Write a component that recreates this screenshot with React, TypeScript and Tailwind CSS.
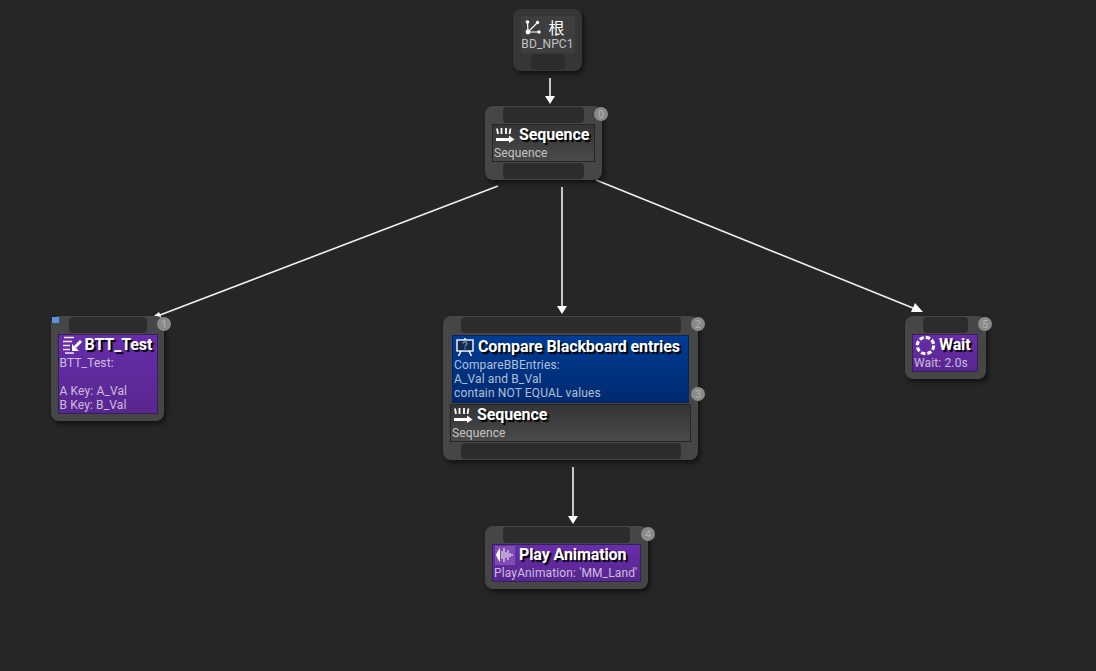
const font = { fontFamily: 'Roboto, sans-serif' };

const title = 'font-["Roboto",sans-serif] text-[16px] leading-[20px] font-bold tracking-[-0.1px] text-white [text-shadow:2px_2px_1px_#000] whitespace-nowrap';
const sub = 'font-["Roboto",sans-serif] text-[12px] leading-[14px] tracking-[0.13px] text-white/70 whitespace-pre';
const pin = 'rounded-[4px] bg-[#2c2c2c]';
const shell = 'absolute flex flex-col rounded-[8px] bg-[#464646] shadow-[2px_3px_5px_rgba(0,0,0,0.55)]';
const purple = 'border border-[#33205a] bg-gradient-to-b from-[#682dab] to-[#58268f]';
const grey = 'border border-[#262626] bg-gradient-to-b from-[#343434] to-[#4a4a4a]';

function Badge({ n, className }: { n: number; className: string }) {
  return (
    <div className={`absolute flex h-[14px] w-[14px] items-center justify-center rounded-full bg-[#8a8a8a] font-["Roboto",sans-serif] text-[11px] leading-none text-[#b0b0b0] ${className}`}>
      {n}
    </div>
  );
}

function SequenceIcon() {
  return (
    <svg width="20" height="16" viewBox="0 0 20 16" className="shrink-0">
      <g stroke="#fff" fill="none">
        <path d="M2 1.5l1 5.5M6.5 1v6M11 1v6M15.5 1.5l-1 5.5" strokeWidth="1.8" />
        <path d="M1 12.5h14" strokeWidth="3" />
      </g>
      <path d="M14 8.5l5.5 4-5.5 3.5z" fill="#fff" />
    </svg>
  );
}

function TaskIcon() {
  return (
    <svg width="21" height="18" viewBox="0 0 21 18" className="shrink-0">
      <g stroke="#f0e8f8" fill="none" strokeWidth="1.5">
        <path d="M2 1.5h10M1 5.5h9M1 9.5h7M1 13.5h7M3 17h9" />
      </g>
      <path d="M19 5l-6 6" stroke="#fff" strokeWidth="3" />
      <path d="M10 8v7h7z" fill="#fff" />
    </svg>
  );
}

function BoardIcon() {
  return (
    <svg width="20" height="20" viewBox="0 0 20 20" className="shrink-0">
      <rect x="2" y="3" width="16" height="11" fill="#15294a" stroke="#e8eef8" strokeWidth="1.5" />
      <path d="M6 14l-2.5 5M14 14l2.5 5M10 1v2" stroke="#f4f6fb" strokeWidth="1.6" fill="none" />
      <path d="M8 6.5c0-2 4-2 4 0 0 1.5-2 1.4-2 3M10 10.5v1.5" stroke="#6f93c8" strokeWidth="1.3" fill="none" />
    </svg>
  );
}

function WaveIcon() {
  return (
    <div className="flex h-[19px] w-[20px] shrink-0 items-center justify-center bg-[#7f4cb4]">
      <svg width="20" height="18" viewBox="0 0 20 18">
        <path d="M1 9c1-2 2-5 4-7v14C3 14 2 11 1 9z" fill="#fff" />
        <path d="M7 5v8M9 2v14M11 6v6M13 4v10M15 7v4M17 8v2" stroke="#e4d8f0" strokeWidth="1.2" />
      </svg>
    </div>
  );
}

function WaitIcon() {
  return (
    <svg width="21" height="21" viewBox="0 0 20 20" className="shrink-0">
      <circle cx="10" cy="10" r="7.8" fill="none" stroke="#fff" strokeWidth="3" strokeDasharray="4.2 1.93" />
    </svg>
  );
}

function RootIcon() {
  return (
    <svg width="16" height="16" viewBox="0 0 16 16" className="shrink-0">
      <path d="M3 13L2.5 3M3 13L12.5 3.5M3 13L14 13" stroke="#fff" strokeWidth="1.2" />
      <circle cx="2.5" cy="3" r="1.8" fill="#fff" />
      <circle cx="3" cy="13" r="2.4" fill="#fff" />
      <circle cx="12.5" cy="3.5" r="1.7" fill="#fff" />
      <circle cx="14" cy="13" r="1.7" fill="#fff" />
    </svg>
  );
}

function Wires() {
  const wires = [
    'M550 78L550 98',
    'M498 186L160 315',
    'M562 187L562 306',
    'M596 180L913 308',
    'M573 467L573 516',
  ];
  return (
    <svg width="1096" height="671" className="absolute inset-0">
      {wires.map((d) => (
        <path key={d} d={d} stroke="#f0f0f0" strokeWidth="1.6" fill="none" />
      ))}
      <path d="M550 104l-5-8h10z" fill="#fff" />
      <path d="M150 319l9-7 4 9z" fill="#fff" />
      <path d="M562 314l-5-8h10z" fill="#fff" />
      <path d="M923 312l-12 0 4-9z" fill="#fff" />
      <path d="M573 524l-5-8h10z" fill="#fff" />
    </svg>
  );
}

export default function App() {
  return (
    <div className="relative h-[671px] w-[1096px] overflow-hidden bg-[#262626]" style={font}>
      <Wires />

      {/* root */}
      <div className="absolute left-[513px] top-[9px] flex h-[62px] w-[69px] flex-col items-center rounded-[8px] bg-[#363636] pt-[7px] shadow-[2px_3px_5px_rgba(0,0,0,0.55)]">
        <div className="flex h-[37px] w-[54px] flex-col items-center bg-[#3e3e3e]">
          <div className="flex h-[21px] items-center gap-[7px] pr-[5px] font-['Noto_Sans_CJK_SC',sans-serif] text-[16px] text-white">
            <RootIcon />
            根
          </div>
          <div className="font-['Roboto',sans-serif] text-[12px] leading-[14px] tracking-[0.13px] text-white/70">BD_NPC1</div>
        </div>
        <div className={`mt-[1px] h-[16px] w-[34px] ${pin}`} />
      </div>

      {/* sequence 0 */}
      <div className={`${shell} left-[485px] top-[106px] h-[74px] w-[117px] items-center pt-[1px]`}>
        <div className={`h-[16px] w-[81px] ${pin}`} />
        <div className={`mt-[1px] h-[38px] w-[103px] px-[1px] ${grey}`}>
          <div className="flex h-[20px] items-center gap-[4px] pl-[1px]">
            <SequenceIcon />
            <span className={title}>Sequence</span>
          </div>
          <div className={`${sub} mt-[1px]`}>Sequence</div>
        </div>
        <div className={`mt-[1px] h-[16px] w-[81px] ${pin}`} />
        <Badge n={0} className="right-[-6px] top-[1px]" />
      </div>

      {/* BTT_Test */}
      <div className={`${shell} left-[51px] top-[316px] h-[105px] w-[113px] items-center pt-[1px]`}>
        <div className="absolute left-[1px] top-[1px] h-[6px] w-[7px] bg-[#5c8fe8]" />
        <div className={`h-[16px] w-[78px] ${pin}`} />
        <div className={`mt-[1px] h-[80px] w-[100px] px-[1px] ${purple}`}>
          <div className="flex h-[20px] items-center gap-[2px] pl-[2px]">
            <TaskIcon />
            <span className={title}>BTT_Test</span>
          </div>
          <div className={`${sub} mt-[1px]`}>{'BTT_Test:\n\nA Key: A_Val\nB Key: B_Val'}</div>
        </div>
        <Badge n={1} className="right-[-7px] top-[1px]" />
      </div>

      {/* compare + sequence */}
      <div className={`${shell} left-[443px] top-[316px] h-[144px] w-[255px] items-center pt-[1px]`}>
        <div className={`h-[16px] w-[220px] ${pin}`} />
        <div className="mt-[2px] h-[68px] w-[237px] border border-[#0a2458] bg-gradient-to-b from-[#003c94] to-[#002a70] px-[1px]">
          <div className="flex h-[21px] items-center gap-[3px] pl-[1px]">
            <BoardIcon />
            <span className={title}>Compare Blackboard entries</span>
          </div>
          <div className={`${sub} mt-[1px]`}>{'CompareBBEntries:\nA_Val and B_Val\ncontain NOT EQUAL values'}</div>
        </div>
        <div className={`mt-[1px] h-[38px] w-[241px] px-[1px] ${grey}`}>
          <div className="flex h-[20px] items-center gap-[4px] pl-[1px]">
            <SequenceIcon />
            <span className={title}>Sequence</span>
          </div>
          <div className={`${sub} mt-[1px]`}>Sequence</div>
        </div>
        <div className={`mt-[1px] h-[16px] w-[220px] ${pin}`} />
        <Badge n={2} className="right-[-7px] top-[1px]" />
        <Badge n={3} className="right-[-7px] top-[71px]" />
      </div>

      {/* play animation */}
      <div className={`${shell} left-[485px] top-[526px] h-[63px] w-[163px] items-center pt-[1px]`}>
        <div className={`h-[16px] w-[127px] ${pin}`} />
        <div className={`mt-[1px] h-[38px] w-[149px] px-[1px] ${purple}`}>
          <div className="flex h-[20px] items-center gap-[4px] pl-[1px]">
            <WaveIcon />
            <span className={title}>Play Animation</span>
          </div>
          <div className={`${sub} mt-[1px] tracking-[0.2px]`}>PlayAnimation: 'MM_Land'</div>
        </div>
        <Badge n={4} className="right-[-7px] top-[1px]" />
      </div>

      {/* wait */}
      <div className={`${shell} left-[905px] top-[316px] h-[63px] w-[81px] items-center pt-[1px] pr-[1px]`}>
        <div className={`h-[16px] w-[45px] ${pin}`} />
        <div className={`mt-[1px] h-[38px] w-[66px] px-[1px] ${purple}`}>
          <div className="flex h-[20px] items-center gap-[3px] pl-[1px]">
            <WaitIcon />
            <span className={title}>Wait</span>
          </div>
          <div className={`${sub} mt-[1px]`}>Wait: 2.0s</div>
        </div>
        <Badge n={5} className="right-[-6px] top-[1px]" />
      </div>
    </div>
  );
}
